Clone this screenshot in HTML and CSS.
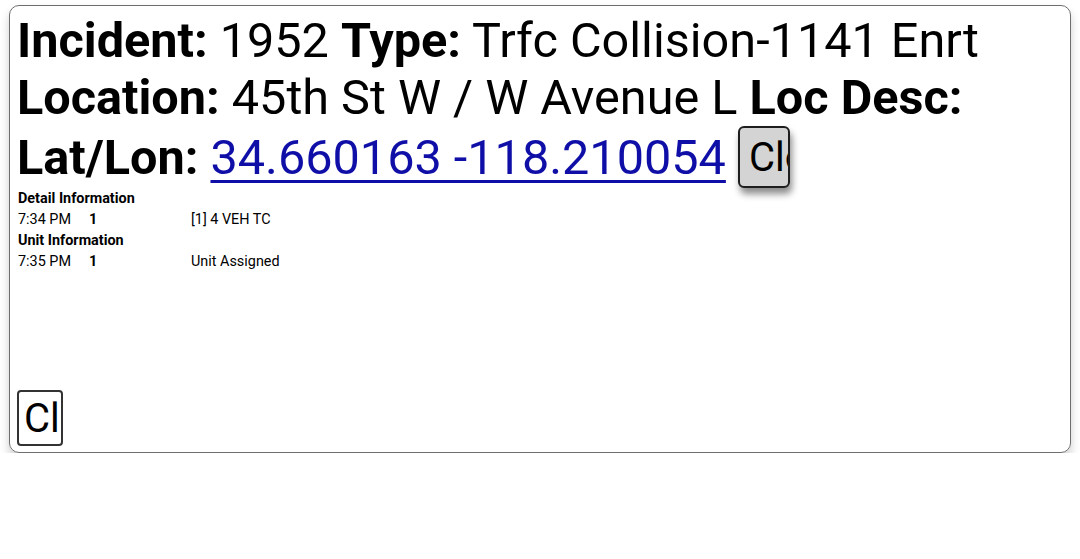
FILE: index.html
```html
<!DOCTYPE html>
<html>
<head>
<meta charset="utf-8">
<link rel="stylesheet" href="styles.css">
</head>
<body>
<div class="card">
  <div class="header">
    <div class="line"><b>Incident:</b> 1952 <b>Type:</b> Trfc Collision-1141 Enrt</div>
    <div class="line"><b>Location:</b> 45th St W / W Avenue L <b>Loc Desc:</b></div>
    <div class="line"><b>Lat/Lon:</b> <a href="#" class="coords">34.660163 -118.210054</a> <button class="btn btn-gray">Close</button></div>
  </div>
  <table class="info">
    <tr><th colspan="3">Detail Information</th></tr>
    <tr><td class="time">7:34 PM</td><td class="num">1</td><td>[1] 4 VEH TC</td></tr>
    <tr><th colspan="3">Unit Information</th></tr>
    <tr><td class="time">7:35 PM</td><td class="num">1</td><td>Unit Assigned</td></tr>
  </table>
  <div class="footer">
    <button class="btn btn-white">Close</button>
  </div>
</div>
</body>
</html>
```

FILE: styles.css
```css
html, body {
  margin: 0;
  padding: 0;
  background: #fff;
}
body {
  font-family: Roboto, "Liberation Sans", sans-serif;
  color: #000;
}
.card {
  margin: 5px 0 0 9px;
  width: 1062px;
  height: 448px;
  box-sizing: border-box;
  border: 1.5px solid #6e6e6e;
  border-radius: 10px;
  box-shadow: 0 6px 10px rgba(0,0,0,0.2);
  padding: 6px 7px 7px 7px;
  display: flex;
  flex-direction: column;
}
.header {
  font-size: 48.6px;
  line-height: 57px;
}
.line b {
  font-weight: 700;
}
.coords {
  color: #0f0fa8;
  text-decoration: underline;
  text-decoration-thickness: 3px;
  text-underline-offset: 6px;
}
.btn {
  font-family: Roboto, "Liberation Sans", sans-serif;
  font-size: 40px;
  overflow: hidden;
  white-space: nowrap;
  text-align: left;
  box-sizing: border-box;
  color: #000;
}
.btn-gray {
  width: 52px;
  height: 62px;
  padding: 0 0 0 9px;
  background: #d4d4d4;
  border: 2px solid #1e1e1e;
  border-radius: 6px;
  box-shadow: 2px 6px 7px rgba(0,0,0,0.45);
  vertical-align: 3px;
}
.info {
  border-collapse: collapse;
  margin-top: 0;
  font-size: 14.4px;
  line-height: 21px;
  margin-left: 1px;
}
.info th {
  text-align: left;
  font-weight: 700;
  padding: 0;
}
.info td {
  padding: 0;
}
.info .time {
  width: 71px;
}
.info .num {
  width: 102px;
  font-weight: 700;
}
.footer {
  margin-top: auto;
}
.btn-white {
  width: 46px;
  height: 56px;
  padding: 0 0 0 5px;
  background: #fff;
  border: 2px solid #333;
  border-radius: 4px;
  margin-left: 0;
  margin-bottom: -1px;
}
```
